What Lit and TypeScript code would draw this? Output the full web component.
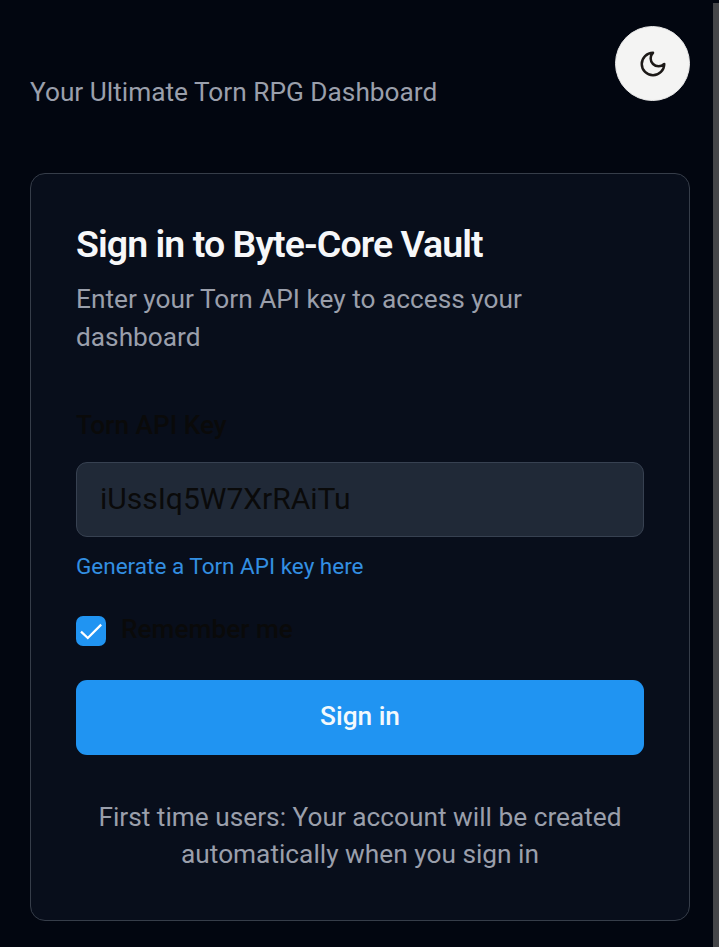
import { LitElement, html, css } from "lit";
import { customElement } from "lit/decorators.js";

@customElement("app-root")
export class AppRoot extends LitElement {
  static styles = css`
    :host { display: block; height: 947px; background: #020610; position: relative; overflow: hidden; font-family: Roboto, sans-serif; color: #0a0a0a; }
    * { box-sizing: border-box; }
    h1, p { margin: 0; }
    .page { padding: 0 29px 0 30px; }
    header { display: flex; justify-content: space-between; height: 173px; }
    .tagline { padding-top: 74px; }
    .muted { color: #9a9fab; font-size: 26.25px; line-height: 37.5px; }
    .theme { width: 75px; height: 75px; margin-top: 26px; padding: 0; border: 1px solid #e8e8e8; border-radius: 50%; background: #f4f4f3; display: grid; place-items: center; }
    .theme svg { width: 30px; height: 30px; display: block; }
    .card { height: 748px; border: 1px solid #363d49; border-radius: 15px; background: #080e1b; padding: 47px 45px 0; display: flex; flex-direction: column; }
    h1 { color: #f6f7f9; font-size: 37.5px; line-height: 46px; font-weight: 600; letter-spacing: -0.94px; }
    .intro { margin-top: 14px; }
    .label { margin-top: 51px; font-size: 26.25px; line-height: 37px; font-weight: 500; }
    input.key { margin-top: 18px; width: 100%; height: 75px; border: 1px solid #374151; border-radius: 11px; background: #202937; font: 30px Roboto, sans-serif; color: #0a0a0a; padding: 0 23px 2px; outline: none; }
    a { margin-top: 14px; color: #338fe2; font-size: 22.5px; line-height: 30px; text-decoration: none; }
    .remember { margin-top: 30px; height: 38px; display: flex; gap: 15px; font-size: 26.25px; line-height: 37px; font-weight: 500; }
    .box { width: 30px; height: 30px; margin-top: 5px; border-radius: 7px; background: #2094f2; }
    .submit { margin-top: 31px; height: 75px; border: 0; border-radius: 11px; padding: 0 6px 4px; background: #2094f2; color: #f3f9fc; font: 500 26.25px Roboto, sans-serif; }
    .note { margin-top: 44px; line-height: 37px; text-align: center; }
    .scroll { position: absolute; right: 0; top: 3px; width: 6px; bottom: 0; background: #454649; }
  `;
  render() {
    return html`
      <div class="page">
        <header>
          <p class="tagline muted">Your Ultimate Torn RPG Dashboard</p>
          <button class="theme" aria-label="Toggle theme">
            <svg viewBox="0 0 24 24" fill="none" stroke="#1c1917" stroke-width="2" stroke-linecap="round" stroke-linejoin="round"><path d="M12 3a6 6 0 0 0 9 9 9 9 0 1 1-9-9Z" /></svg>
          </button>
        </header>
        <main class="card">
          <h1>Sign in to Byte-Core Vault</h1>
          <p class="intro muted">Enter your Torn API key to access your dashboard</p>
          <label class="label" for="key">Torn API Key</label>
          <input class="key" id="key" .value=${"iUssIq5W7XrRAiTu"} />
          <a href="#">Generate a Torn API key here</a>
          <div class="remember">
            <svg class="box" viewBox="0 0 30 30" fill="none" stroke="#fff" stroke-width="2.2"><path d="M25.2 8.6 11.8 22 5 15.6" /></svg>
            <span>Remember me</span>
          </div>
          <button class="submit">Sign in</button>
          <p class="note muted">First time users: Your account will be created<br />automatically when you sign in</p>
        </main>
      </div>
      <div class="scroll"></div>
    `;
  }
}
